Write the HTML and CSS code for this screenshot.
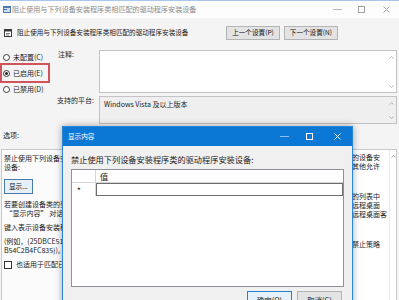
FILE: index.html
```html
<!DOCTYPE html>
<html>
<head>
<meta charset="utf-8">
<title>阻止使用与下列设备安装程序类相匹配的驱动程序安装设备</title>
<link rel="stylesheet" href="styles.css">
</head>
<body>

<div class="window">
    <div class="titlebar">
        <svg class="app-icon" width="8" height="7" viewBox="0 0 8 7">
            <rect x="0" y="0" width="8" height="7" fill="#4f79b6"/>
            <rect x="1" y="2" width="6" height="4" fill="#cfdcee"/>
            <rect x="1" y="3" width="3" height="1" fill="#4f79b6"/>
        </svg>
        <span class="title">阻止使用与下列设备安装程序类相匹配的驱动程序安装设备</span>
        <div class="controls">
            <span class="ctl">
                <svg width="9" height="9" viewBox="0 0 9 9"><path d="M0 4.5 H9" stroke="#b5b5b5"/></svg>
            </span>
            <span class="ctl">
                <svg width="9" height="9" viewBox="0 0 9 9"><rect x="1.5" y="1.5" width="6" height="6" fill="none" stroke="#a0a0a0"/></svg>
            </span>
            <span class="ctl close">
                <svg width="9" height="9" viewBox="0 0 9 9"><path d="M1.5 1.5 L7.5 7.5 M7.5 1.5 L1.5 7.5" stroke="#a0a0a0"/></svg>
            </span>
        </div>
    </div>

    <div class="header">
        <svg class="policy-icon" width="8" height="8" viewBox="0 0 8 8">
            <rect x="0.5" y="0.5" width="7" height="7" fill="#fff" stroke="#3a3a3a"/>
            <rect x="0.5" y="0.5" width="7" height="2" fill="#3a3a3a"/>
            <path d="M2 4.5 H6 M2 6 H5" stroke="#7a7a7a"/>
        </svg>
        <span class="policy-name">阻止使用与下列设备安装程序类相匹配的驱动程序安装设备</span>
        <div class="nav">
            <button class="btn">上一个设置(P)</button>
            <button class="btn">下一个设置(N)</button>
        </div>
    </div>

    <div class="settings">
        <div class="states">
            <div class="radio"><span class="dot"></span>未配置(C)</div>
            <div class="radio checked marked"><span class="dot"></span>已启用(E)</div>
            <div class="radio"><span class="dot"></span>已禁用(D)</div>
        </div>
        <div class="fields">
            <div class="label">注释:</div>
            <div class="box comment">
                <div class="text"></div>
                <div class="scroll">
                    <svg width="5" height="3" viewBox="0 0 5 3"><path d="M0.5 2.5 L2.5 0.5 L4.5 2.5" fill="none" stroke="#b0b0b0"/></svg>
                    <svg width="5" height="3" viewBox="0 0 5 3"><path d="M0.5 0.5 L2.5 2.5 L4.5 0.5" fill="none" stroke="#b0b0b0"/></svg>
                </div>
            </div>
            <div class="label">支持的平台:</div>
            <div class="box platform">
                <div class="text">Windows Vista 及以上版本</div>
                <div class="scroll">
                    <svg width="5" height="3" viewBox="0 0 5 3"><path d="M0.5 2.5 L2.5 0.5 L4.5 2.5" fill="none" stroke="#b0b0b0"/></svg>
                    <svg width="5" height="3" viewBox="0 0 5 3"><path d="M0.5 0.5 L2.5 2.5 L4.5 0.5" fill="none" stroke="#b0b0b0"/></svg>
                </div>
            </div>
        </div>
    </div>

    <div class="captions">
        <div class="caption">选项:</div>
        <div class="caption">帮助:</div>
    </div>

    <div class="panes">
        <div class="pane options">
            <div class="line">禁止使用下列设备安装程序类的驱动程序安装</div>
            <div class="line">设备:</div>
            <button class="btn show">显示...</button>
            <div class="para">
                <div class="line">若要创建设备类的列表，请单击“显示”。在</div>
                <div class="line">&nbsp;“显示内容” 对话框的“值”列中，键入</div>
            </div>
            <div class="para">
                <div class="line">键入表示设备安装程序类的 GUID</div>
            </div>
            <div class="para">
                <div class="line">(例如，{25DBCE51-6C8F-4A72-8A6D-</div>
                <div class="line">B54C2B4FC835})。</div>
            </div>
            <div class="check-row">
                <span class="check"></span>也适用于匹配已安装的设备。
            </div>
        </div>
        <div class="pane help">
            <div class="help-text">
                <p>
                    <span class="line">此策略设置允许你指定列表，其中列出阻止安装的设备安</span>
                    <span class="line">装程序类的全局唯一标识符。该策略设置优先于其他允许</span>
                    <span class="line">安装设备的策略设置。</span>
                </p>
                <p>
                    <span class="line">如果启用此策略设置，则阻止安装出现在你创建的列表中</span>
                    <span class="line">的设备驱动程序。如果在启用此策略设置时使用远程桌面</span>
                    <span class="line">服务器，则此策略设置还会影响指定设备从某个远程桌面客</span>
                    <span class="line">户端到服务器的重定向。</span>
                </p>
                <p>
                    <span class="line">如果禁用或未配置此策略设置，则设备可按其他禁止策略</span>
                    <span class="line">设置进行安装和更新。</span>
                </p>
            </div>
            <div class="scroll">
                <svg width="5" height="3" viewBox="0 0 5 3"><path d="M0.5 2.5 L2.5 0.5 L4.5 2.5" fill="none" stroke="#b0b0b0"/></svg>
            </div>
        </div>
    </div>
</div>

<div class="modal">
    <div class="modal-bar">
        <span class="modal-title">显示内容</span>
        <div class="modal-controls">
            <span class="mctl">
                <svg width="9" height="9" viewBox="0 0 9 9"><path d="M0 4.5 H9" stroke="#8fc0ec"/></svg>
            </span>
            <span class="mctl">
                <svg width="9" height="9" viewBox="0 0 9 9"><rect x="1.5" y="1.5" width="6" height="6" fill="none" stroke="#fff"/></svg>
            </span>
            <span class="mctl close">
                <svg width="9" height="9" viewBox="0 0 9 9"><path d="M1.5 1.5 L7.5 7.5 M7.5 1.5 L1.5 7.5" stroke="#fff"/></svg>
            </span>
        </div>
    </div>
    <div class="modal-body">
        <div class="modal-label">禁止使用下列设备安装程序类的驱动程序安装设备:</div>
        <div class="grid">
            <div class="grid-row head">
                <div class="cell mark"></div>
                <div class="cell value">值</div>
            </div>
            <div class="grid-row">
                <div class="cell mark">*</div>
                <div class="cell value edit"></div>
            </div>
        </div>
        <div class="modal-buttons">
            <button class="btn default">确定(O)</button>
            <button class="btn">取消(C)</button>
        </div>
    </div>
</div>

</body>
</html>
```

FILE: styles.css
```css
* {
    box-sizing: border-box;
}

body {
    margin: 0;
    width: 399px;
    height: 300px;
    overflow: hidden;
    position: relative;
    font-family: "Noto Sans CJK SC", "Noto Sans", sans-serif;
    font-size: 7px;
    line-height: 9px;
    color: #1b1b1b;
    background: #f4f4f4;
}

.window {
    height: 300px;
    display: flex;
    flex-direction: column;
}

/**** TITLE BAR ****/

.titlebar {
    height: 18px;
    display: flex;
    align-items: center;
    padding-left: 3px;
    background: #fdfdfd;
    border-top: 1px solid #a8c7ea;
}

.app-icon {
    flex: none;
}

.title {
    margin-left: 1px;
    color: #8c8c8c;
    font-size: 7.1px;
    white-space: nowrap;
}

.controls {
    margin-left: auto;
    display: flex;
}

.ctl {
    width: 24px;
    height: 17px;
    display: flex;
    align-items: center;
    justify-content: center;
}

.ctl.close {
    width: 26px;
}

/**** HEADER ****/

.header {
    height: 27px;
    display: flex;
    align-items: center;
    padding: 2px 0 0 4px;
}

.policy-icon {
    flex: none;
}

.policy-name {
    margin-left: 5px;
    font-size: 6.6px;
    white-space: nowrap;
}

.nav {
    margin-left: auto;
    margin-right: 61px;
    display: flex;
    gap: 4px;
}

.btn {
    font-family: inherit;
    font-size: 6.6px;
    line-height: 9px;
    color: #111;
    height: 14px;
    padding: 0 5px;
    background: #e3e3e3;
    border: 1px solid #b4b4b4;
    border-radius: 0;
}

/**** SETTINGS ****/

.settings {
    display: flex;
    height: 79px;
}

.states {
    width: 57px;
    padding: 5px 0 0 3px;
    display: flex;
    flex-direction: column;
    gap: 2px;
}

.radio {
    width: 44px;
    height: 14px;
    display: flex;
    align-items: center;
    gap: 3px;
    white-space: nowrap;
}

.dot {
    width: 7px;
    height: 7px;
    border: 1px solid #3a3a3a;
    border-radius: 50%;
    background: #fff;
    display: flex;
    align-items: center;
    justify-content: center;
}

.radio.checked .dot::after {
    content: "";
    width: 3px;
    height: 3px;
    border-radius: 50%;
    background: #222;
}

.marked {
    outline: 2px solid #d2545b;
    outline-offset: 1px;
}

.fields {
    flex: 1;
    display: grid;
    grid-template-columns: 42px 1fr;
    grid-template-rows: 43px 28px;
    row-gap: 3px;
    padding: 5px 2px 0 0;
}

.label {
    white-space: nowrap;
}

.label:first-child {
    padding-left: 1px;
}

.box {
    display: flex;
    border: 1px solid #c3c3c3;
    background: #fff;
}

.box .text {
    flex: 1;
    padding: 3px 0 0 4px;
}

.box.platform {
    background: #efefef;
}

.scroll {
    width: 9px;
    display: flex;
    flex-direction: column;
    justify-content: space-between;
    align-items: center;
    padding: 5px 0 4px;
}

/**** OPTIONS / HELP ****/

.captions {
    height: 25px;
    display: flex;
    padding: 7px 0 0 3px;
}

.caption {
    width: 199px;
}

.panes {
    flex: 1;
    display: flex;
    gap: 3px;
    padding: 0 2px 0 1px;
}

.pane {
    border: 1px solid #c9c9c9;
    background: #fbfbfb;
    border-bottom: none;
}

.options {
    width: 198px;
    padding: 4px 2px 0;
    overflow: hidden;
}

.line {
    display: block;
    white-space: nowrap;
}

.btn.show {
    margin: 7px 0 6px;
    height: 15px;
    padding: 0 4px;
    background: #e5f0fa;
    border: 1px solid #4a7aa6;
}

.para {
    margin-bottom: 5px;
}

.check-row {
    margin-top: 4px;
    display: flex;
    align-items: center;
    gap: 4px;
    white-space: nowrap;
}

.check {
    width: 8px;
    height: 8px;
    border: 1px solid #333;
    background: #fff;
}

.help {
    flex: 1;
    display: flex;
    background: #fff;
    overflow: hidden;
}

.help-text {
    flex: 1;
    padding: 3px 0 0 2px;
    overflow: hidden;
}

.help-text p {
    margin: 0 0 12px;
}

.help .scroll {
    width: 7px;
    justify-content: flex-start;
    padding-top: 5px;
    border-left: 1px solid #ececec;
}

/**** MODAL ****/

.modal {
    position: absolute;
    left: 62px;
    top: 126px;
    width: 291px;
    height: 190px;
    border: 1px solid #2a86d8;
    background: #f0f0f0;
    box-shadow: 0 0 7px rgba(0, 0, 0, 0.35);
}

.modal-bar {
    height: 19px;
    display: flex;
    align-items: center;
    background: #0b78d6;
    color: #fff;
}

.modal-title {
    padding-left: 5px;
    font-size: 6.6px;
}

.modal-controls {
    margin-left: auto;
    display: flex;
}

.mctl {
    width: 25px;
    height: 19px;
    display: flex;
    align-items: center;
    justify-content: center;
}

.mctl.close {
    width: 30px;
}

.modal-body {
    padding: 8px 8px 0;
    font-size: 8.2px;
    line-height: 11px;
}

.modal-label {
    white-space: nowrap;
    margin-bottom: 4px;
}

.grid {
    height: 118px;
    border: 1px solid #8f9399;
    background: #fff;
}

.grid-row {
    height: 13px;
    display: flex;
    border-bottom: 1px solid #d6d6d6;
}

.grid-row:last-child {
    border-bottom: none;
}

.cell.mark {
    width: 24px;
    border-right: 1px solid #d6d6d6;
    padding-left: 5px;
    line-height: 14px;
}

.cell.value {
    flex: 1;
    padding-left: 4px;
    line-height: 12px;
}

.cell.edit {
    border: 1px solid #6d6d6d;
}

.modal-buttons {
    display: flex;
    justify-content: flex-end;
    gap: 5px;
    margin: 4px 2px 0 0;
}

.modal-buttons .btn {
    width: 45px;
    height: 16px;
    font-size: 7.4px;
}

.btn.default {
    border-color: #2a7fd0;
    background: #e5f1fb;
}
```
